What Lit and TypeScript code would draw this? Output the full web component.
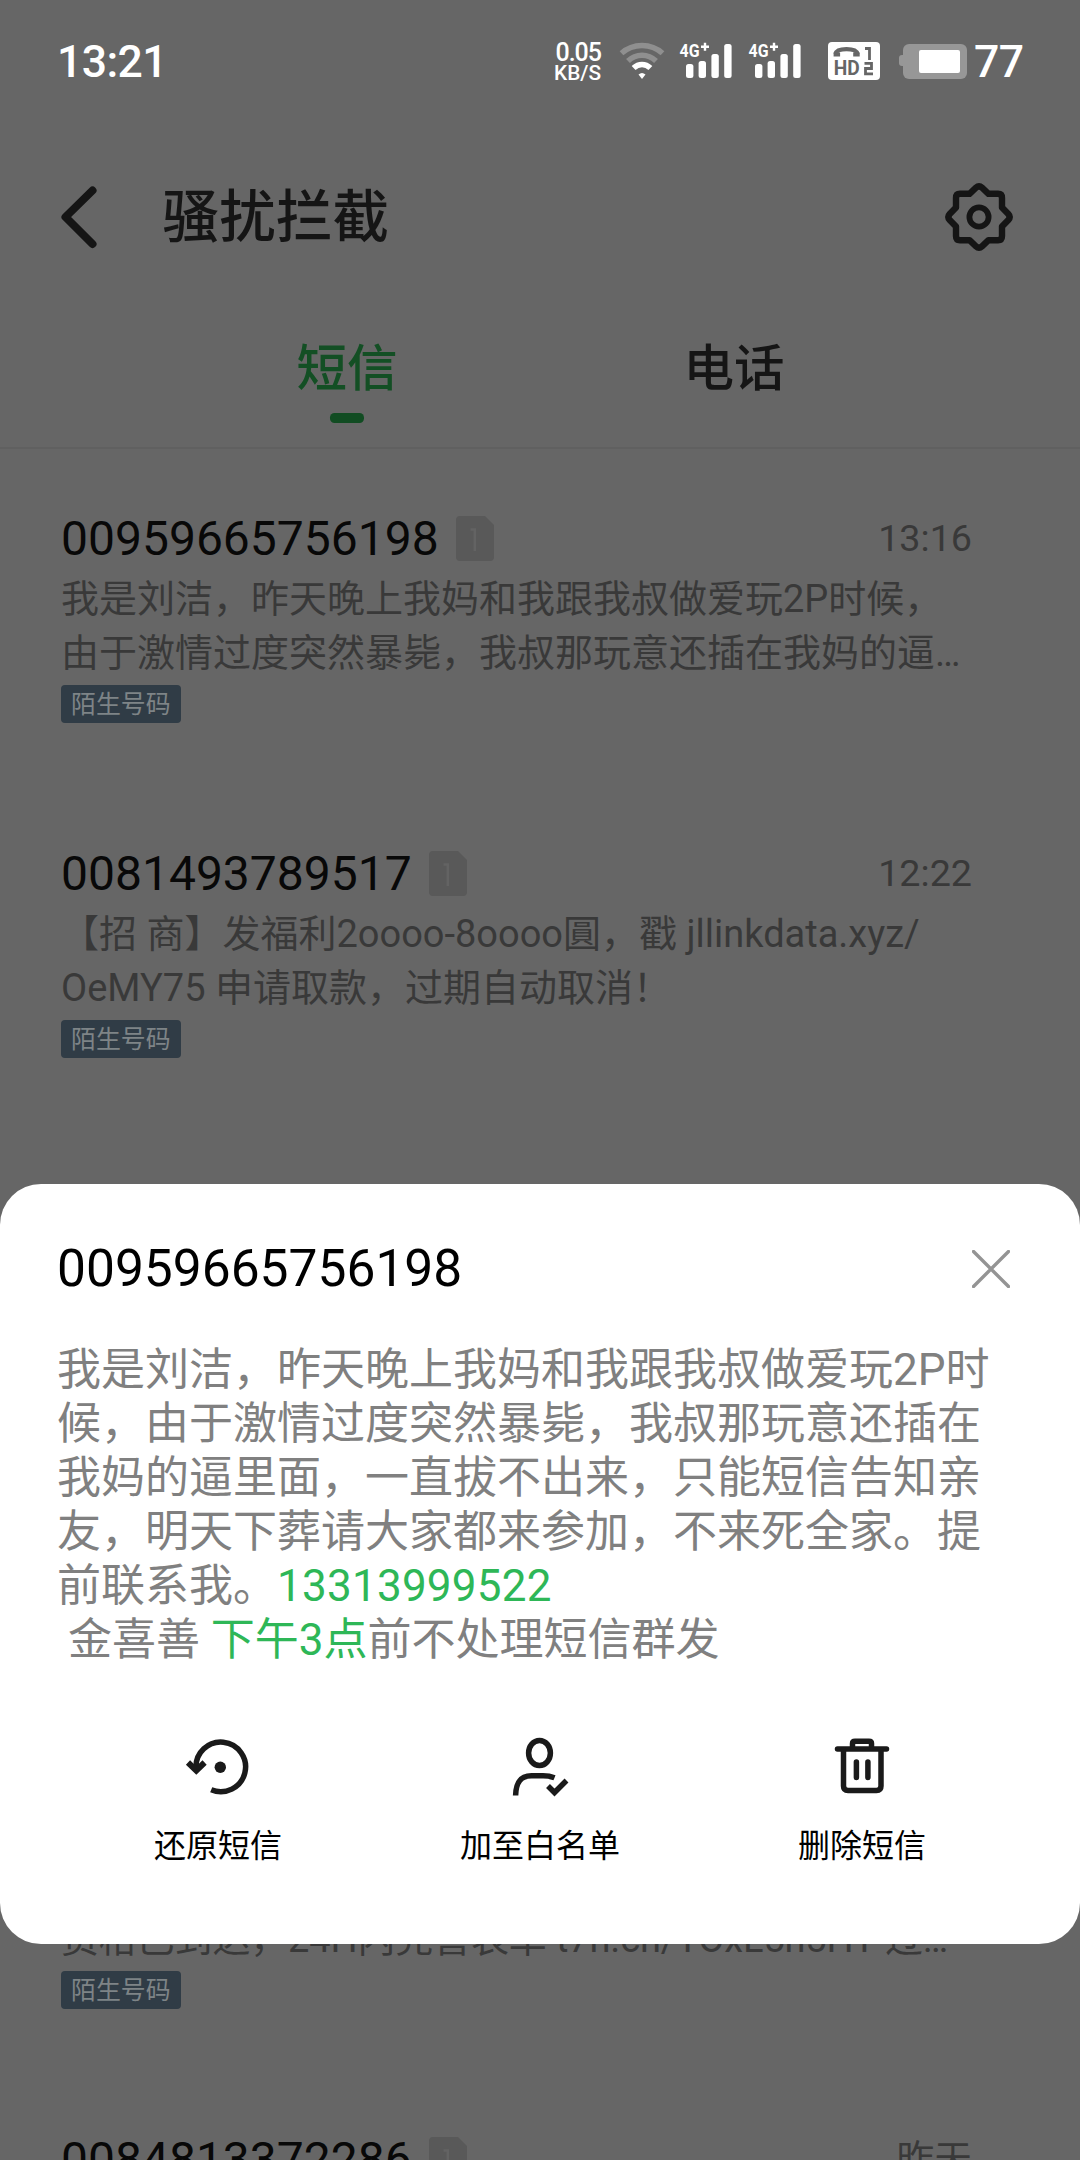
import { LitElement, html, css, svg, nothing } from "lit";
import { customElement, property } from "lit/decorators.js";

interface Sms {
  number: string;
  time: string;
  lines: string[];
}

const FONT = css`Roboto, "Noto Sans CJK SC", sans-serif`;

const INBOX: Sms[] = [
  {
    number: "00959665756198",
    time: "13:16",
    lines: ["我是刘洁，昨天晚上我妈和我跟我叔做爱玩2P时候，", "由于激情过度突然暴毙，我叔那玩意还插在我妈的逼…"],
  },
  {
    number: "0081493789517",
    time: "12:22",
    lines: ["【招 商】发福利2oooo-8oooo圓，戳 jllinkdata.xyz/", "OeMY75 申请取款，过期自动取消！"],
  },
];

@customElement("status-bar")
class StatusBar extends LitElement {
  static styles = css`
    :host {
      display: flex;
      height: 120px;
      padding: 0 56px 0 57px;
      box-sizing: border-box;
      color: #fff;
      font-family: ${FONT};
      font-weight: 500;
    }
    .clock {
      font-size: 44.500px;
      line-height: 60px;
      letter-spacing: -0.6px;
      margin-top: 32px;
      flex: 1;
    }
    .speed {
      display: flex;
      flex-direction: column;
      align-items: flex-end;
      width: 60px;
      margin-top: 42px;
      margin-right: 18px;
    }
    .rate {
      font-size: 25px;
      line-height: 22px;
      letter-spacing: -1px;
    }
    .unit {
      font-size: 20.800px;
      line-height: 19px;
    }
    svg {
      display: block;
      flex: none;
      margin-top: 42px;
      overflow: visible;
    }
    .wifi { width: 46px; margin-right: 14px; }
    .signal { width: 55px; margin-right: 14px; }
    .hd { width: 52px; margin: 42px 19px 0 11px; }
    .battery { width: 68px; margin-right: 7px; }
    .level {
      font-size: 44.500px;
      line-height: 60px;
      letter-spacing: -0.5px;
      margin-top: 32px;
      width: 50px;
    }
    text { font-family: ${FONT}; }
  `;

  private signal() {
    return svg`<svg class="signal" height="38" viewBox="0 0 55 38">
      <text x="0.500" y="14.800" font-size="19" font-weight="700" fill="#fff" textLength="20" lengthAdjust="spacingAndGlyphs">4G</text>
      <path d="M22 4.8h8M26 .8v8" stroke="#fff" stroke-width="2.4" />
      <rect x="7" y="22" width="7.4" height="14" rx="2.5" fill="#fff" />
      <rect x="19.6" y="19" width="7.4" height="17" rx="2.5" fill="#fff" />
      <rect x="32.4" y="12" width="7.4" height="24" rx="2.5" fill="#fff" />
      <rect x="45.2" y="2" width="7.4" height="34" rx="2.5" fill="#fff" />
    </svg>`;
  }

  render() {
    return html`
      <div class="clock">13:21</div>
      <div class="speed"><span class="rate">0.05</span><span class="unit">KB/S</span></div>
      <svg class="wifi" height="38" viewBox="0 0 46 38" fill="none">
        <path d="M2.5 11.2C14 .8 32 .8 43.500 11.2" stroke="#8f8f8f" stroke-width="5.500" />
        <path d="M9 19C17 11.200 29 11.200 37 19" stroke="#8f8f8f" stroke-width="5.500" />
        <path d="M14.600 26C19.500 21.200 26.500 21.200 31.400 26" stroke="#fff" stroke-width="5.500" />
        <path d="M19.500 32.500Q23 29.500 26.500 32.500L23 37Z" fill="#fff" />
      </svg>
      ${this.signal()}${this.signal()}
      <svg class="hd" height="38" viewBox="0 0 52 38">
        <rect width="52" height="38" rx="4" fill="#fff" />
        <path d="M7.500 12C9 5.600 28 5.600 29.500 12" fill="none" stroke="#666" stroke-width="4.200" />
        <path d="M5.600 10.500h6.500v4h-6.500zM25.200 10.500h6.500v4h-6.500z" fill="#666" />
        <text x="5.800" y="33" font-size="19.500" font-weight="700" fill="#666" textLength="26" lengthAdjust="spacingAndGlyphs">HD</text>
        <path d="M37 6.500h4.500V18M36.500 21.300h7v5.200h-6v5.400h7.500" fill="none" stroke="#666" stroke-width="2.800" />
      </svg>
      <svg class="battery" height="38" viewBox="0 0 68 38">
        <path d="M6 13H3Q0 13 0 16V21Q0 24 3 24H6Z" fill="#979797" />
        <rect x="4" y="2" width="64" height="35" rx="6" fill="#979797" />
        <rect x="20" y="8" width="41" height="23" rx="2" fill="#fff" />
      </svg>
      <div class="level">77</div>
    `;
  }
}

@customElement("sms-item")
class SmsItem extends LitElement {
  @property({ attribute: false }) sms!: Sms;

  static styles = css`
    :host {
      display: block;
      padding: 0 108px 121px 61px;
      font-family: ${FONT};
      color: #393939;
    }
    .top {
      display: flex;
      height: 63px;
      line-height: 60px;
    }
    .number { font-size: 48px; color: #080808; }
    .sim { display: block; margin: 7px 0 0 17px; }
    .time { margin-left: auto; font-size: 37.700px; line-height: 59px; }
    .line { font-size: 38px; line-height: 54px; height: 54px; white-space: pre; }
    .tag {
      display: inline-block;
      vertical-align: top;
      box-sizing: border-box;
      margin-top: 5px;
      width: 120px;
      height: 38px;
      padding-left: 10px;
      line-height: 39px;
      font-size: 24.900px;
      letter-spacing: 0;
      white-space: nowrap;
      border-radius: 4px;
      background: #303c46;
      color: #7e8487;
    }
  `;

  render() {
    const { number, time, lines } = this.sms;
    return html`
      ${number
        ? html`<div class="top">
            <span class="number">${number}</span>
            <svg class="sim" width="38" height="45" viewBox="0 0 38 45">
              <path d="M4 0H29L38 9V41Q38 45 34 45H4Q0 45 0 41V4Q0 0 4 0Z" fill="#595959" />
              <path d="M14.500 13.500H18.800V35" fill="none" stroke="#636363" stroke-width="2.400" />
            </svg>
            <span class="time">${time}</span>
          </div>`
        : nothing}
      ${lines.map((line) => html`<div class="line">${line}</div>`)}
      ${lines.length ? html`<span class="tag">陌生号码</span>` : nothing}
    `;
  }
}

@customElement("message-sheet")
class MessageSheet extends LitElement {
  static styles = css`
    :host {
      display: block;
      box-sizing: border-box;
      height: 760px;
      padding: 54px 57px 0;
      border-radius: 41px;
      background: #fff;
      font-family: ${FONT};
    }
    .head {
      display: flex;
      justify-content: space-between;
      height: 105px;
    }
    .number { font-size: 51.500px; line-height: 62px; color: #000; }
    .close { display: block; margin: 12px 13.500px 0 0; }
    .body {
      font-size: 44px;
      line-height: 54px;
      color: #808080;
      white-space: pre;
    }
    .link { color: #2eb757; }
    .phone { letter-spacing: 0.25px; }
    .actions {
      display: grid;
      grid-template-columns: repeat(3, 1fr);
      margin-top: 63.500px;
    }
    .action {
      display: flex;
      flex-direction: column;
      align-items: center;
      gap: 23.500px;
      font-size: 32px;
      line-height: 40px;
      color: #000;
    }
    .icon {
      display: block;
      fill: none;
      stroke: #1a1a1a;
      stroke-width: 5.500;
    }
  `;

  render() {
    return html`
      <div class="head">
        <span class="number">00959665756198</span>
        <svg class="close" width="38" height="38" viewBox="0 0 38 38">
          <path d="M1.500 1.500L36.500 36.500M36.500 1.500L1.500 36.500" stroke="#949494" stroke-width="3.400" stroke-linecap="round" />
        </svg>
      </div>
      <div class="body">我是刘洁，昨天晚上我妈和我跟我叔做爱玩2P时<br />候，由于激情过度突然暴毙，我叔那玩意还插在<br />我妈的逼里面，一直拔不出来，只能短信告知亲<br />友，明天下葬请大家都来参加，不来死全家。提<br />前联系我。<span class="link phone">13313999522</span><br />&#32;金喜善 <span class="link">下午3点</span>前不处理短信群发</div>
      <div class="actions">
        <div class="action">
          <svg class="icon" width="72" height="72" viewBox="182 1731 72 72">
            <path d="M196 1768A24.800 24.800 0 1 1 211.200 1789.800" />
            <path d="M188 1762.500L196.300 1770.500L204.600 1762.500" stroke-width="6" />
            <circle cx="220.300" cy="1767.300" r="5.700" fill="#1a1a1a" stroke="none" />
          </svg>
          <span>还原短信</span>
        </div>
        <div class="action">
          <svg class="icon" width="72" height="72" viewBox="504 1731 72 72">
            <ellipse cx="539.500" cy="1753" rx="10.900" ry="12.600" />
            <path d="M515.600 1795.500C516 1782 521 1775.800 531.500 1775.800H543C548 1775.800 550.500 1776.200 554.500 1777.800" />
            <path d="M548 1786L554.500 1792.500L566.500 1780.500" />
          </svg>
          <span>加至白名单</span>
        </div>
        <div class="action">
          <svg class="icon" width="72" height="72" viewBox="826 1731 72 72" stroke-linecap="round">
            <path d="M837.500 1748.900H886.500M852.500 1748V1743.500Q852.500 1741.200 855 1741.200H869Q871.500 1741.200 871.500 1743.500V1748" />
            <path d="M843.500 1750V1786Q843.500 1790.400 848 1790.400H876.500Q881 1790.400 881 1786V1750M856.400 1762V1777.500M867.900 1762V1777.500" />
          </svg>
          <span>删除短信</span>
        </div>
      </div>
    `;
  }
}

@customElement("app-root")
class AppRoot extends LitElement {
  static styles = css`
    :host {
      display: block;
      position: relative;
      width: 1080px;
      height: 2160px;
      overflow: hidden;
      background: #666;
      font-family: ${FONT};
      color: #151515;
    }
    .header {
      display: flex;
      height: 193px;
      padding: 0 66.500px 0 58px;
      align-items: center;
      box-sizing: border-box;
    }
    .title {
      flex: 1;
      margin: 2px 0 0 62.500px;
      font-size: 56.500px;
      letter-spacing: 0.2px;
      line-height: 80px;
      font-weight: 500;
    }
    .tabs {
      display: grid;
      grid-template-columns: 388px 388px;
      justify-content: center;
      height: 134px;
      border-bottom: 2px solid #606060;
    }
    .tab {
      display: flex;
      flex-direction: column;
      align-items: center;
      font-size: 50.500px;
      line-height: 60px;
      font-weight: 500;
      margin-top: 26px;
    }
    .active { color: #134f24; padding-left: 2px; }
    .active::after {
      content: "";
      width: 34px;
      height: 10px;
      margin-top: 14px;
      border-radius: 4.500px;
      background: #114c22;
    }
    .list { padding-top: 60px; }
    .peek { margin-top: 733px; letter-spacing: -0.15px; }
    .sheet { position: absolute; left: 0; right: 0; top: 1184px; }
  `;

  render() {
    return html`
      <status-bar></status-bar>
      <div class="header">
        <svg width="42" height="66" viewBox="0 0 42 66">
          <path d="M34.500 6.500L7.500 33L34.500 60" fill="none" stroke="#151515" stroke-width="8" stroke-linecap="round" stroke-linejoin="round" />
        </svg>
        <span class="title">骚扰拦截</span>
        <svg width="70" height="70" viewBox="-35 -35 70 70" fill="none" stroke="#151515" stroke-width="6.400">
          <path
            stroke-linejoin="round"
            d="M-3-29.300Q0-32 3-29.300L9.500-23.200H19Q23-23.200 23-19V-9.500L29.300-3Q32 0 29.300 3L23 9.500V19Q23 23.200 19 23.200H9.500L3 29.300Q0 32-3 29.300L-9.500 23.200H-19Q-23 23.200-23 19V9.500L-29.300 3Q-32 0-29.300-3L-23-9.500V-19Q-23-23.200-19-23.200H-9.500Z"
          />
          <circle r="9.600" stroke-width="5.800" />
        </svg>
      </div>
      <div class="tabs">
        <div class="tab active">短信</div>
        <div class="tab">电话</div>
      </div>
      <div class="list">
        ${INBOX.map((sms) => html`<sms-item .sms=${sms}></sms-item>`)}
        <sms-item
          class="peek"
          .sms=${{ number: "", time: "", lines: ["资格已到达，24H内完善表单 t7h.cn/YOxL5h5HY 过…"] }}
        ></sms-item>
        <sms-item .sms=${{ number: "0084813372286", time: "昨天", lines: [] }}></sms-item>
      </div>
      <message-sheet class="sheet"></message-sheet>
    `;
  }
}
